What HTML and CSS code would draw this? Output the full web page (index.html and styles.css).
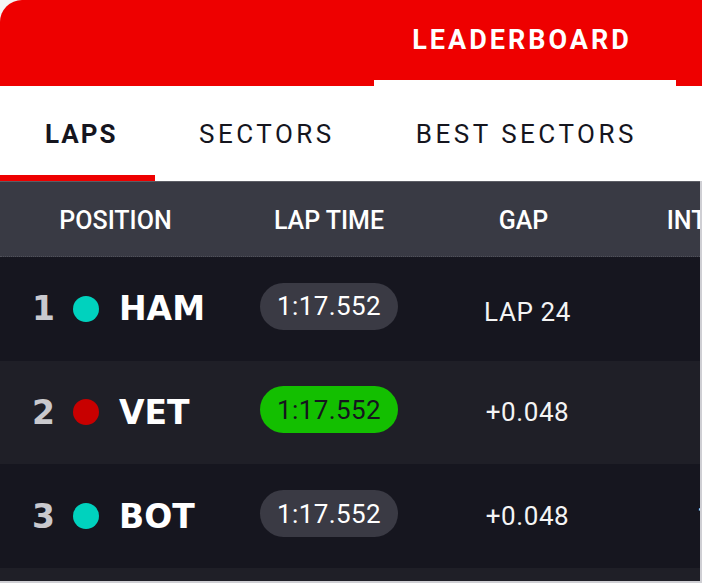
FILE: index.html
```html
<!DOCTYPE html>
<html lang="en">
<head>
<meta charset="utf-8">
<title>Leaderboard</title>
<link rel="stylesheet" href="styles.css">
</head>
<body>
<div class="board">
  <header class="topbar">
    <div class="title">
      <span class="title-text">LEADERBOARD</span>
      <span class="title-bar"></span>
    </div>
  </header>
  <nav class="tabs">
    <div class="tab tab--active">LAPS</div>
    <div class="tab">SECTORS</div>
    <div class="tab">BEST SECTORS</div>
  </nav>
  <div class="table">
    <div class="thead">
      <div class="th">POSITION</div>
      <div class="th">LAP TIME</div>
      <div class="th">GAP</div>
      <div class="th">INTERVAL</div>
    </div>
    <div class="row">
      <div class="pos"><span class="pos-num">1</span><span class="dot dot--teal"></span><span class="name">HAM</span></div>
      <div class="time"><span class="pill">1:17.552</span></div>
      <div class="gap gap--lead">LAP 24</div>
      <div class="gap"></div>
    </div>
    <div class="row row--alt">
      <div class="pos"><span class="pos-num">2</span><span class="dot dot--red"></span><span class="name">VET</span></div>
      <div class="time"><span class="pill pill--best">1:17.552</span></div>
      <div class="gap">+0.048</div>
      <div class="gap"></div>
    </div>
    <div class="row">
      <div class="pos"><span class="pos-num">3</span><span class="dot dot--teal"></span><span class="name">BOT</span></div>
      <div class="time"><span class="pill">1:17.552</span></div>
      <div class="gap">+0.048</div>
      <div class="gap gap--int">1.048</div>
    </div>
    <div class="row row--alt row--partial"></div>
  </div>
</div>
</body>
</html>
```

FILE: styles.css
```css
html, body {
  margin: 0;
  padding: 0;
}

body {
  width: 702px;
  height: 583px;
  overflow: hidden;
  background: #f4f4f4;
  font-family: Roboto, "Liberation Sans", sans-serif;
}

.board {
  width: 702px;
  height: 583px;
  display: flex;
  flex-direction: column;
}

/* red top bar */
.topbar {
  height: 86px;
  flex: none;
  background: #ee0000;
  border-top-left-radius: 22px;
  display: flex;
  justify-content: flex-end;
  padding-right: 26px;
  box-sizing: border-box;
}

.title {
  width: 302px;
  display: flex;
  flex-direction: column;
  align-items: center;
}

.title-text {
  flex: 1;
  display: flex;
  align-items: center;
  padding-right: 6px;
  color: #ffffff;
  font-weight: 700;
  font-size: 27px;
  letter-spacing: 3px;
}

.title-bar {
  height: 6px;
  width: 100%;
  background: #ffffff;
}

/* tabs */
.tabs {
  height: 95px;
  flex: none;
  background: #ffffff;
  display: flex;
}

.tab {
  box-sizing: border-box;
  display: flex;
  align-items: center;
  padding: 7px 37px 0 44px;
  border-bottom: 6px solid transparent;
  color: #15151e;
  font-size: 26px;
  font-weight: 400;
  letter-spacing: 3.5px;
}

.tab--active {
  width: 155px;
  padding-left: 45px;
  padding-right: 0;
  font-weight: 700;
  letter-spacing: 2px;
  border-bottom-color: #ee0000;
}

/* table */
.table {
  flex: 1;
  overflow: hidden;
  border-right: 2px solid #cfcfd4;
  border-bottom: 2px solid #cfcfd4;
  background: #1f1f27;
}

.thead,
.row {
  display: grid;
  grid-template-columns: 231px 196px 193px 208px;
  align-items: center;
}

.thead {
  height: 76px;
  box-sizing: border-box;
  padding-top: 3px;
  background: #393a44;
  border-top: 1px solid #5d5e66;
  border-bottom: 1px dotted #50515a;
}

.th {
  text-align: center;
  color: #ffffff;
  font-size: 25px;
  font-weight: 500;
  white-space: nowrap;
}

.row {
  height: 103.67px;
  background: #16161f;
}

.row--alt {
  background: #1f1f27;
}

.row--partial {
  height: 13px;
}

.pos {
  display: flex;
  align-items: center;
  padding-left: 32px;
}

.pos-num {
  width: 41px;
  color: #c9c9ce;
  font-family: "DejaVu Sans", sans-serif;
  font-weight: 700;
  font-size: 33px;
  line-height: 1;
}

.dot {
  width: 26px;
  height: 26px;
  border-radius: 50%;
  margin-right: 20px;
}

.dot--teal {
  background: #00d2be;
}

.dot--red {
  background: #c80000;
}

.name {
  color: #ffffff;
  font-family: "DejaVu Sans", sans-serif;
  font-weight: 700;
  font-size: 33px;
  line-height: 1;
}

.time {
  display: flex;
  justify-content: center;
  padding-bottom: 5px;
}

.pill {
  width: 138px;
  height: 47px;
  border-radius: 24px;
  background: #3a3a44;
  color: #ffffff;
  display: flex;
  align-items: center;
  justify-content: center;
  font-size: 26px;
  letter-spacing: 0.4px;
}

.pill--best {
  background: #13bf00;
  color: #15151e;
}

.gap {
  text-align: center;
  color: #f4f4f4;
  font-size: 26px;
  letter-spacing: 0.6px;
  padding-left: 8px;
  white-space: nowrap;
}

.gap--lead {
  padding-top: 6px;
}

.gap--int {
  text-align: left;
  padding-left: 77px;
}
```
